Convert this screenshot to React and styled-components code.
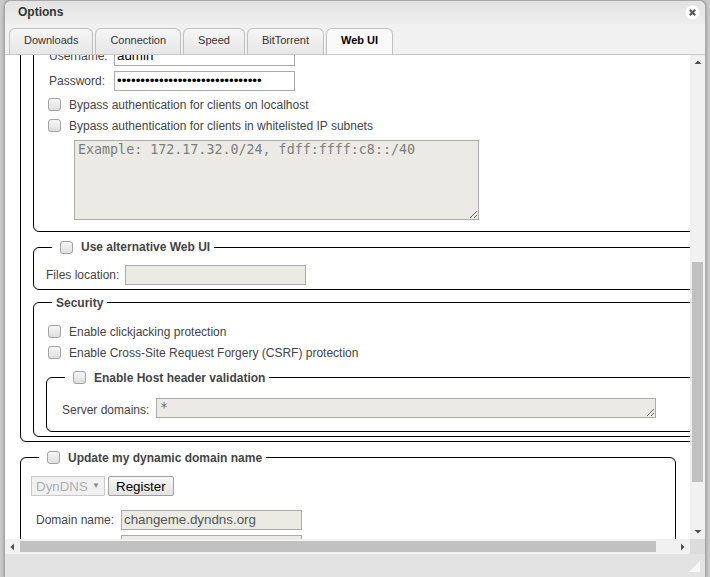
import React, { useRef, useLayoutEffect, useState } from 'react';
import styled, { createGlobalStyle } from 'styled-components';

const GlobalStyle = createGlobalStyle`
  html, body {
    margin: 0;
    padding: 0;
    height: 100%;
    overflow: hidden;
  }
  body {
    background: #c9c9c9;
    font-family: "Liberation Sans", Arial, sans-serif;
  }
`;

const Desktop = styled.div`
  width: 710px;
  height: 577px;
  padding-left: 4px;
  box-sizing: border-box;
  display: flex;
  overflow: hidden;
`;

const Window = styled.div`
  width: 702px;
  height: 577px;
  box-sizing: border-box;
  display: flex;
  flex-direction: column;
  border: 1px solid #a9a9a9;
  border-bottom: none;
  border-radius: 7px 7px 0 0;
  background: #f1f1f1;
  box-shadow: 0 0 3px rgba(0, 0, 0, 0.35);
  overflow: hidden;
`;

const TitleBar = styled.div`
  height: 23px;
  flex: none;
  display: flex;
  align-items: center;
  justify-content: space-between;
  padding: 0 5px 0 13px;
  background: linear-gradient(#e3e3e3, #eeeeee);
`;

const Title = styled.h3`
  margin: 0 0 1px;
  font-size: 12px;
  font-weight: bold;
  color: #333;
`;

const CloseButton = styled.button`
  width: 15px;
  height: 15px;
  padding: 0;
  border: none;
  background: none;
  display: flex;
`;

const TabBar = styled.div`
  flex: none;
  display: flex;
  gap: 2px;
  padding: 4px 0 0 4px;
  border-bottom: 1px solid #c8c8c8;
  background: #f1f1f1;
`;

const Tab = styled.div`
  height: 26px;
  box-sizing: border-box;
  padding: 0 14px 3px;
  display: flex;
  align-items: center;
  border: 1px solid #c0c0c0;
  border-bottom: none;
  border-radius: 6px 6px 0 0;
  background: ${p => (p.$active ? '#f9f9f9' : 'linear-gradient(#f6f6f6, #e6e6e6)')};
  font-size: 11px;
  font-weight: ${p => (p.$active ? 'bold' : 'normal')};
  color: ${p => (p.$active ? '#000' : '#333')};
`;

const ScrollArea = styled.div`
  flex: 1;
  min-height: 0;
  display: grid;
  grid-template-columns: minmax(0, 1fr) 15px;
  grid-template-rows: minmax(0, 1fr) 15px;
  background: #fff;
`;

const Viewport = styled.div`
  overflow: hidden;
  min-width: 0;
  min-height: 0;
`;

const Bar = styled.div`
  display: flex;
  flex-direction: ${p => (p.$vertical ? 'column' : 'row')};
  background: #f1f1f1;
`;

const ArrowButton = styled.div`
  flex: none;
  width: 15px;
  height: 15px;
  display: flex;
  align-items: center;
  justify-content: center;
`;

const Track = styled.div`
  flex: 1;
  min-width: 0;
  min-height: 0;
  display: flex;
  flex-direction: ${p => (p.$vertical ? 'column' : 'row')};
`;

const Thumb = styled.div`
  flex: none;
  background: #c1c1c1;
  margin: ${p => (p.$vertical ? '0 2px' : '2px 0')};
`;

const Corner = styled.div`
  background: #dcdcdc;
`;

const Page = styled.div`
  width: max-content;
  padding: 6px 7px 45px 15px;
`;

const Fieldset = styled.fieldset`
  margin: ${p => p.$mt ?? 6}px 0 0;
  padding: 8px 2px ${p => p.$pb ?? 4}px 12px;
  width: ${p => (p.$w ? `${p.$w}px` : 'auto')};
  box-sizing: border-box;
  border: 1px solid #000;
  border-radius: 6px;
  min-width: 0;
`;

const Legend = styled.legend`
  margin-left: 6px;
  padding: 0 4px;
  font-size: 12px;
  font-weight: bold;
  color: #444;
`;

const LegendInner = styled.span`
  display: flex;
  align-items: center;
`;

const Checkbox = styled.input.attrs({ type: 'checkbox' })`
  appearance: none;
  flex: none;
  width: 13px;
  height: 13px;
  margin: ${p => (p.$legend ? '3px 8px 3px 4px' : '0 8px 0 2px')};
  border: 1px solid #a3a3a3;
  border-radius: 3px;
  background: linear-gradient(#f6f6f6, #dedede);
  box-sizing: border-box;
`;

const Row = styled.div`
  display: flex;
  align-items: center;
  height: ${p => p.$h ?? 25}px;
  padding-left: ${p => p.$indent ?? 0}px;
  gap: ${p => p.$gap ?? 0}px;
`;

const Group = styled.div`
  margin-top: ${p => p.$mt ?? 0}px;
`;

const CheckRow = styled.label`
  display: flex;
  align-items: center;
  height: 21px;
  font-size: 12px;
  color: #444;
`;

const Label = styled.label`
  flex: none;
  width: ${p => (p.$w ? `${p.$w}px` : 'auto')};
  margin-top: ${p => p.$drop ?? 0}px;
  font-size: 12px;
  color: #444;
`;

const TextInput = styled.input`
  flex: none;
  width: ${p => p.$w ?? 181}px;
  height: 20px;
  box-sizing: border-box;
  margin: 0;
  padding: 0 2px;
  border: 1px solid #ababab;
  border-radius: 0;
  background: ${p => (p.disabled ? '#ebebe4' : '#fff')};
  font-family: "Liberation Sans", Arial, sans-serif;
  font-size: 13.333px;
  color: ${p => (p.disabled ? '#545454' : '#000')};
`;

const TextArea = styled.textarea`
  display: block;
  flex: none;
  width: ${p => p.$w}px;
  height: ${p => p.$h}px;
  box-sizing: border-box;
  margin: ${p => p.$m ?? '0'};
  padding: 1px 3px;
  border: 1px solid #ababab;
  background: #ebeae4;
  font-family: "DejaVu Sans Mono", monospace;
  font-size: 13.333px;
  color: #6d6d6d;
  &::placeholder {
    color: #7d7d7d;
  }
`;

const SelectWrap = styled.div`
  position: relative;
  display: inline-flex;
  margin-left: ${p => p.$ml ?? 0}px;
  &::after {
    content: '▼';
    position: absolute;
    right: 5px;
    top: 5px;
    font-size: 8px;
    color: #8a8a8a;
    pointer-events: none;
  }
`;

const Select = styled.select`
  appearance: none;
  height: 20px;
  width: ${p => p.$w}px;
  box-sizing: border-box;
  margin: 0;
  padding: 0 14px 0 4px;
  border: 1px solid #b5b5b5;
  border-radius: 0;
  background: #ececec;
  font-family: "Liberation Sans", Arial, sans-serif;
  font-size: 13.333px;
  color: #8d8d8d;
`;

const Button = styled.button`
  height: 20px;
  margin: 0;
  padding: 0 7px;
  border: 1px solid #a0a0a0;
  border-radius: 2px;
  background: linear-gradient(#f8f8f8, #e2e2e2);
  font-family: "Liberation Sans", Arial, sans-serif;
  font-size: 13.333px;
  color: #000;
`;

const InfoLink = styled.a`
  display: block;
  padding: 2px 0 2px 3px;
  font-size: 12px;
  color: #336699;
`;

const Footer = styled.div`
  height: 23px;
  flex: none;
  box-sizing: border-box;
  display: flex;
  justify-content: flex-end;
  align-items: flex-end;
  padding: 0 5px 5px 0;
  background: #e3e3e3;
`;

const CloseIcon = () => (
  <svg width="15" height="15" viewBox="0 0 15 15">
    <circle cx="7.5" cy="7.5" r="7" fill="#fff" />
    <path d="M4.8 4.8 L10.2 10.2 M10.2 4.8 L4.8 10.2" stroke="#5a5a5a" strokeWidth="2.2" />
  </svg>
);

const arrowPaths = {
  up: 'M0.5 5 L4 1.5 L7.5 5 Z',
  down: 'M0.5 2 L4 5.5 L7.5 2 Z',
  left: 'M5 0.5 L1.5 4 L5 7.5 Z',
  right: 'M2 0.5 L5.5 4 L2 7.5 Z',
};

const Arrow = ({ dir }) => (
  <ArrowButton>
    <svg width="8" height="8" viewBox="0 0 8 8">
      <path d={arrowPaths[dir]} fill="#505050" />
    </svg>
  </ArrowButton>
);

const ResizeGrip = () => (
  <svg width="11" height="11" viewBox="0 0 11 11">
    <path d="M11 0 L11 11 L0 11 Z" fill="#f8f8f8" />
  </svg>
);

const tabs = ['Downloads', 'Connection', 'Speed', 'BitTorrent', 'Web UI'];

function thumbOf(client, total, pos) {
  const track = client - 30;
  if (total <= client) return { size: track, offset: 0 };
  const size = Math.max(17, Math.round((track * client) / total));
  const offset = Math.round(((track - size) * pos) / (total - client));
  return { size, offset };
}

export default function App() {
  const scrollRef = useRef(null);
  const anchorRef = useRef(null);
  const [bars, setBars] = useState({ v: { size: 0, offset: 0 }, h: { size: 0, offset: 0 } });

  useLayoutEffect(() => {
    const s = scrollRef.current;
    const a = anchorRef.current;
    if (!s || !a) return;
    s.scrollTop = a.getBoundingClientRect().top - s.getBoundingClientRect().top + 12;
    s.scrollLeft = 0;
    setBars({
      v: thumbOf(s.clientHeight, s.scrollHeight, s.scrollTop),
      h: thumbOf(s.clientWidth, s.scrollWidth, s.scrollLeft),
    });
  }, []);

  return (
    <>
      <GlobalStyle />
      <Desktop>
        <Window>
          <TitleBar>
            <Title>Options</Title>
            <CloseButton aria-label="Close">
              <CloseIcon />
            </CloseButton>
          </TitleBar>
          <TabBar>
            {tabs.map(t => (
              <Tab key={t} $active={t === 'Web UI'}>{t}</Tab>
            ))}
          </TabBar>
          <ScrollArea>
            <Viewport ref={scrollRef}>
              <Page>
                <Fieldset $w={656} $mt={0}>
                  <Legend>Language</Legend>
                  <Row $indent={3} $h={30}>
                    <Label $w={150}>User Interface Language:</Label>
                    <SelectWrap>
                      <Select $w={120} defaultValue="en">
                        <option value="en">English</option>
                      </Select>
                    </SelectWrap>
                  </Row>
                </Fieldset>

                <Fieldset $w={683}>
                  <Legend>Web User Interface (Remote control)</Legend>
                  <Row $indent={3} $gap={6}>
                    <Label $w={62}>IP address:</Label>
                    <TextInput defaultValue="*" $w={140} />
                    <Label $w={30}>Port:</Label>
                    <TextInput defaultValue="8080" $w={60} />
                  </Row>
                  <CheckRow>
                    <Checkbox />
                    Use UPnP / NAT-PMP to forward the port from my router
                  </CheckRow>

                  <Fieldset>
                    <Legend>
                      <LegendInner>
                        <Checkbox $legend />
                        Use HTTPS instead of HTTP
                      </LegendInner>
                    </Legend>
                    <Row $indent={3} $h={94}>
                      <Label $w={90}>Certificate:</Label>
                      <TextArea $w={400} $h={80} disabled />
                    </Row>
                    <Row $indent={3} $h={94}>
                      <Label $w={90}>Key:</Label>
                      <TextArea $w={400} $h={80} disabled />
                    </Row>
                    <InfoLink href="#">Information about certificates</InfoLink>
                  </Fieldset>

                  <Fieldset $pb={11}>
                    <Legend>Authentication</Legend>
                    <Row $indent={3} ref={anchorRef}>
                      <Label $w={65}>Username:</Label>
                      <TextInput defaultValue="admin" />
                    </Row>
                    <Row $indent={3}>
                      <Label $w={65}>Password:</Label>
                      <TextInput type="password" defaultValue="qbittorrentadminpasswordhidden1" />
                    </Row>
                    <Group $mt={1}>
                      <CheckRow>
                        <Checkbox />
                        Bypass authentication for clients on localhost
                      </CheckRow>
                      <CheckRow>
                        <Checkbox />
                        Bypass authentication for clients in whitelisted IP subnets
                      </CheckRow>
                    </Group>
                    <TextArea
                      $w={405}
                      $h={80}
                      $m="3.5px 0 0 28px"
                      disabled
                      placeholder="Example: 172.17.32.0/24, fdff:ffff:c8::/40"
                    />
                  </Fieldset>

                  <Fieldset>
                    <Legend>
                      <LegendInner>
                        <Checkbox $legend />
                        Use alternative Web UI
                      </LegendInner>
                    </Legend>
                    <Row $h={20} $gap={6}>
                      <Label>Files location:</Label>
                      <TextInput disabled />
                    </Row>
                  </Fieldset>

                  <Fieldset>
                    <Legend>Security</Legend>
                    <Group $mt={3.5}>
                      <CheckRow>
                        <Checkbox />
                        Enable clickjacking protection
                      </CheckRow>
                      <CheckRow>
                        <Checkbox />
                        Enable Cross-Site Request Forgery (CSRF) protection
                      </CheckRow>
                    </Group>
                    <Fieldset $mt={5} $pb={10}>
                      <Legend>
                        <LegendInner>
                          <Checkbox $legend />
                          Enable Host header validation
                        </LegendInner>
                      </Legend>
                      <Row $indent={3} $h={26}>
                        <Label $w={94} $drop={4}>Server domains:</Label>
                        <TextArea $w={500} $h={20} disabled defaultValue="*" />
                      </Row>
                    </Fieldset>
                  </Fieldset>
                </Fieldset>

                <Fieldset $w={656}>
                  <Legend>
                    <LegendInner>
                      <Checkbox $legend />
                      Update my dynamic domain name
                    </LegendInner>
                  </Legend>
                  <Row $h={22} $gap={3}>
                    <SelectWrap $ml={-2}>
                      <Select $w={74} disabled defaultValue="dyndns">
                        <option value="dyndns">DynDNS</option>
                      </Select>
                    </SelectWrap>
                    <Button type="button">Register</Button>
                  </Row>
                  <Group $mt={10}>
                    <Row $indent={3}>
                      <Label $w={85}>Domain name:</Label>
                      <TextInput disabled defaultValue="changeme.dyndns.org" />
                    </Row>
                    <Row $indent={3}>
                      <Label $w={85}>Username:</Label>
                      <TextInput disabled />
                    </Row>
                    <Row $indent={3}>
                      <Label $w={85}>Password:</Label>
                      <TextInput disabled type="password" />
                    </Row>
                  </Group>
                </Fieldset>
              </Page>
            </Viewport>
            <Bar $vertical>
              <Arrow dir="up" />
              <Track $vertical>
                <Thumb $vertical style={{ marginTop: bars.v.offset, height: bars.v.size }} />
              </Track>
              <Arrow dir="down" />
            </Bar>
            <Bar>
              <Arrow dir="left" />
              <Track>
                <Thumb style={{ marginLeft: bars.h.offset, width: bars.h.size }} />
              </Track>
              <Arrow dir="right" />
            </Bar>
            <Corner />
          </ScrollArea>
          <Footer>
            <ResizeGrip />
          </Footer>
        </Window>
      </Desktop>
    </>
  );
}
